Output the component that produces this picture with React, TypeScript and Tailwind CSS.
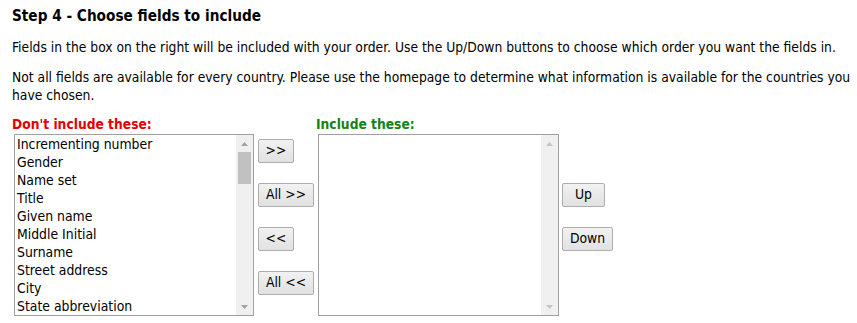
import React from "react";

const items = [
  "Incrementing number",
  "Gender",
  "Name set",
  "Title",
  "Given name",
  "Middle Initial",
  "Surname",
  "Street address",
  "City",
  "State abbreviation",
];

function Scrollbar({ thumb, disabled }: { thumb?: boolean; disabled?: boolean }) {
  const arrow = disabled ? "#c4c4c4" : "#a3a3a3";
  return (
    <div className="flex w-[17px] flex-col bg-[#f0f0f0]">
      <div className="flex h-[17px] items-center justify-center">
        <svg width="7" height="4" viewBox="0 0 7 4">
          <polygon points="3.5,0 7,4 0,4" fill={arrow} />
        </svg>
      </div>
      <div className="flex-1 px-[2px]">
        {thumb && <div className="h-[32px] w-full bg-[#c1c1c1]" />}
      </div>
      <div className="flex h-[17px] items-center justify-center">
        <svg width="7" height="4" viewBox="0 0 7 4">
          <polygon points="0,0 7,0 3.5,4" fill={arrow} />
        </svg>
      </div>
    </div>
  );
}

function Btn({ children, w, mt }: { children: React.ReactNode; w: string; mt: string }) {
  return (
    <button
      className={`${w} ${mt} h-[24px] rounded-[2px] border border-[#adadad] bg-gradient-to-b from-[#f2f2f2] to-[#e1e1e1] text-[13.8px] leading-none text-black`}
    >
      {children}
    </button>
  );
}

export default function App() {
  return (
    <div className="h-[323px] w-[857px] overflow-hidden bg-white pl-[12px] pr-0 pt-[7px] font-['DejaVu_Sans_Condensed','DejaVu_Sans',sans-serif] text-[13.75px] leading-[18px] text-black [font-stretch:condensed]">
      <h2 className="text-[15.2px] font-bold leading-[18px]">Step 4 - Choose fields to include</h2>
      <p className="mt-[13px]">
        Fields in the box on the right will be included with your order. Use the Up/Down buttons to choose which order you want the fields in.
      </p>
      <p className="mt-[12px]">
        Not all fields are available for every country. Please use the homepage to determine what information is available for the countries you have chosen.
      </p>
      <div className="mt-[11px] flex text-[13.85px]">
        <div className="flex flex-col">
          <div className="text-[13.7px] font-bold text-[#e30000]">Don't include these:</div>
          <div className="ml-[2px] mt-[1px] flex h-[182px] w-[240px] border border-[#a0a0a0]">
            <div className="flex-1 overflow-hidden pl-[2px]">
              {items.map((it) => (
                <div key={it} className="h-[18px] whitespace-nowrap">
                  {it}
                </div>
              ))}
            </div>
            <Scrollbar thumb />
          </div>
        </div>
        <div className="ml-[4px] flex flex-col pt-[24px]">
          <Btn w="w-[36px]" mt="mt-0">&gt;&gt;</Btn>
          <Btn w="w-[56px]" mt="mt-[20px]">All &gt;&gt;</Btn>
          <Btn w="w-[36px]" mt="mt-[20px]">&lt;&lt;</Btn>
          <Btn w="w-[56px]" mt="mt-[20px]">All &lt;&lt;</Btn>
        </div>
        <div className="ml-[2px] flex flex-col">
          <div className="text-[13.7px] font-bold text-[#138313]">Include these:</div>
          <div className="ml-[2px] mt-[1px] flex h-[182px] w-[241px] border border-[#a0a0a0]">
            <div className="flex-1" />
            <Scrollbar disabled />
          </div>
        </div>
        <div className="ml-[3px] flex flex-col pt-[68px]">
          <Btn w="w-[43px]" mt="mt-0">Up</Btn>
          <Btn w="w-[51px]" mt="mt-[20px]">Down</Btn>
        </div>
      </div>
    </div>
  );
}
